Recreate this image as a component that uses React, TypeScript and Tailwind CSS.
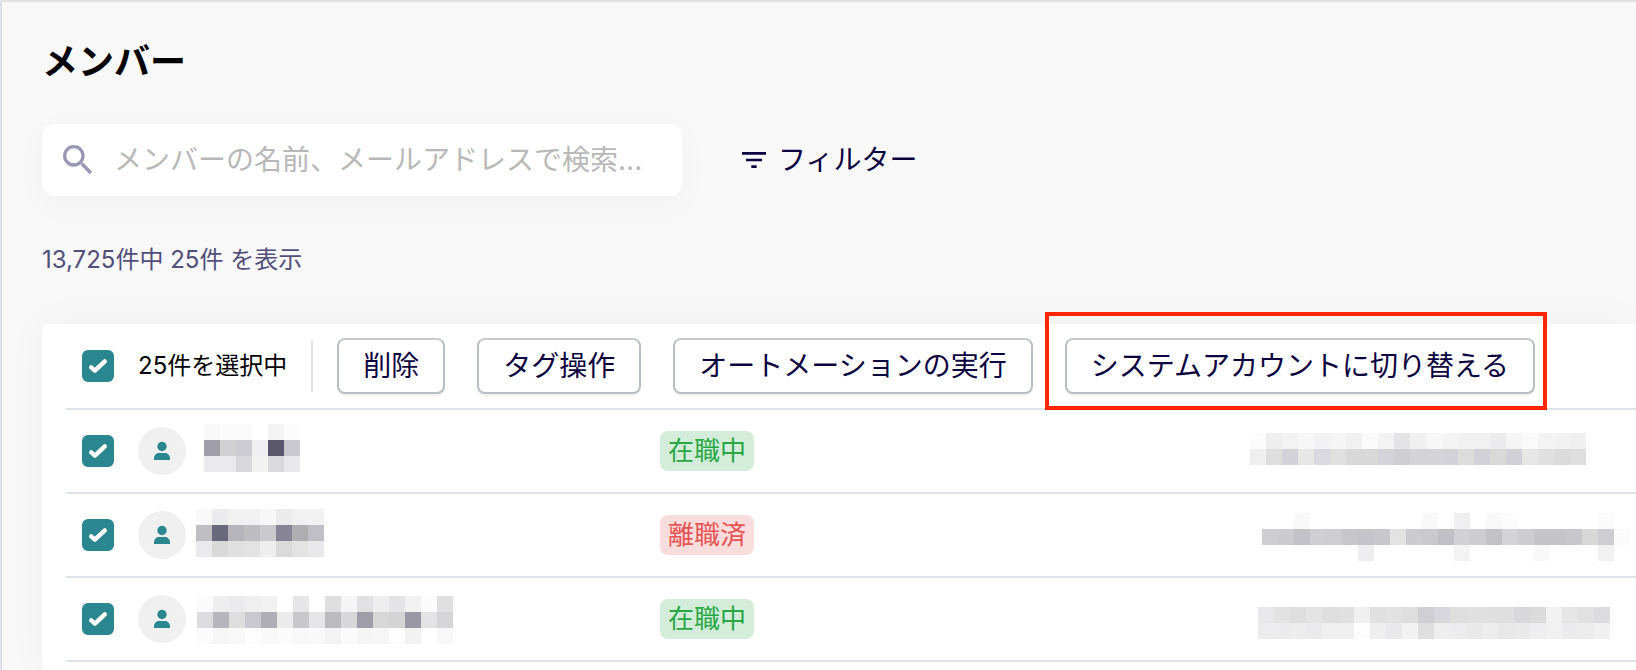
import { useState } from 'react';
import { MdFilterList, MdSearch } from 'react-icons/md';

interface MosaicData {
    x: number;
    y: number;
    rows: string[][];
}

interface Member {
    id: number;
    status: 'active' | 'retired';
    name: MosaicData;
    email: MosaicData;
}

const statusLabels = {
    active: '在職中',
    retired: '離職済',
};

const statusColors = {
    active: 'bg-[#d4edda] text-[#28a745]',
    retired: 'bg-[#f9dddd] text-[#e55353]',
};

// Grey cells of the masked values, one string per line of cells
const cells = (line: string) => line.split(' ').map((c) => `#${c}`);

const members: Member[] = [
    {
        id: 1,
        status: 'active',
        name: {
            x: 10,
            y: 5,
            rows: [
                cells('f8f8f8 fbfbfb fafafa ffffff f3f3f3 fcfcfc'),
                cells('9f9da8 d1d1d3 cdccd2 f0f0f3 5b586d cac9cf'),
                cells('eaeaec eaeaec d9d9db f2f2f2 dadadc e9e9eb'),
            ],
        },
        email: {
            x: 4,
            y: 14,
            rows: [
                cells('fcfcfc eeeeee f3f3f3 f7f7f7 f2f2f5 f5f5f5 f1f1f1 fafafa f3f3f3 e4e4e6 f0f0f0 f7f7f7 f4f4f4 f1f1f1 f1f1f1 ebebee f5f5f5 fafafa f3f3f3 f2f2f2 f0f0f0'),
                cells('efefef dededf d3d2d8 e7e7e8 dad9df e0e0e1 d8d8d9 d8d8d9 d4d3d9 cfced3 d4d3d8 d4d3d8 d3d2d8 dcdcdd d2d1d7 d9d9da d1d0d6 e7e7e8 e0e0e1 dbdbdc dededf'),
            ],
        },
    },
    {
        id: 2,
        status: 'retired',
        name: {
            x: 2,
            y: 6,
            rows: [
                cells('f9f9f9 ebebed f1f1f1 f1f1f1 f7f7f7 ebebeb f1f1f1 f1f1f1'),
                cells('bfbec3 6a687b b6b5bb bebdc2 cac9ce 868495 aeaeb3 c0bfc6'),
                cells('eaeaec d9d9da e0e0e1 e3e3e4 eeeeee dadadb e3e3e4 e9e9eb'),
            ],
        },
        email: {
            x: 16,
            y: 10,
            rows: [
                cells('ffffff ffffff f9f9f9 ffffff ffffff ffffff ffffff ffffff ffffff ffffff f9f9f9 ffffff efeff1 ffffff f9f9f9 fcfcfc ffffff ffffff ffffff ffffff ffffff fbfbfb ffffff'),
                cells('cecdd2 cccbd0 c3c2c8 cfced3 cecdd2 c7c6cb c5c4ca c8c7cc e3e3e4 cccbd0 cac9ce c0bfc5 d1d0d5 cdccd1 c3c2c7 d4d3d8 cdccd1 c5c4c9 c5c4c9 c8c7cb d8d8d9 cecdd2 fbfbfb'),
                cells('ffffff ffffff ffffff ffffff ffffff ffffff eeeef1 ffffff ffffff ffffff ffffff ffffff f3f3f3 ffffff ffffff ffffff ffffff f9f9f9 ffffff ffffff ffffff f1f1f1 ffffff'),
            ],
        },
    },
    {
        id: 3,
        status: 'active',
        name: {
            x: 3,
            y: 9,
            rows: [
                cells('fbfbfb eeeeee ebebed efefef f1f1f1 ffffff e6e6e8 ffffff dededf f5f5f5 e1e1e3 eeeeee e4e4e6 f1f1f1 fbfbfb e0e0e1'),
                cells('dcdcde b6b5bc dededf cac9cf afaeb4 ebebeb c8c8ca e5e5e8 bababf d8d8da 9f9ea8 d7d7d8 d4d4d5 9a99a3 e3e3e5 d5d5d7'),
                cells('fbfbfb f6f6f6 f8f8f8 fdfdfd f9f9f9 fbfbfb f8f8f8 f9f9f9 f3f3f3 fafafa f5f5f5 f6f6f6 fdfdfd f2f2f2 ffffff f8f8f8'),
            ],
        },
        email: {
            x: 12,
            y: 20,
            rows: [
                cells('e8e8ea e2e2e3 dededf e4e4e5 dfdfe0 e0e0e1 f0f0f0 e0e0e1 e2e2e3 dededf d0cfd4 d8d7dd dededf e0e0e1 dfdfe0 dfdfe0 d8d8da dbdbdc f2f2f2 e6e6e7 e1e1e2 dcdcde'),
                cells('ececee ebebed ededed eaeaec efefef efefef fdfdfd eeeeee e9e9eb f2f2f2 dfdfe0 eeeeee ececee e9e9ea ededed e8e8e9 e9e9ea eeeef0 f1f1f1 ebebed ececec f0f0f0'),
            ],
        },
    },
];

function Mosaic({ data }: { data: MosaicData }) {
    const width = data.x + data.rows[0].length * 16;

    return (
        <svg
            width={width}
            height="64"
            viewBox={`0 0 ${width} 64`}
            shapeRendering="crispEdges"
            className="block shrink-0"
            aria-hidden="true"
        >
            {data.rows.map((row, r) =>
                row.map((fill, c) => (
                    <rect
                        key={`${r}-${c}`}
                        x={data.x + c * 16}
                        y={data.y + r * 16}
                        width="16"
                        height="16"
                        fill={fill}
                    />
                )),
            )}
        </svg>
    );
}

interface CheckboxProps {
    id: string;
    label?: string;
    checked: boolean;
    onChange: () => void;
}

function Checkbox({ id, label, checked, onChange }: CheckboxProps) {
    return (
        <span className="relative block h-8 w-8 shrink-0">
            <input
                id={id}
                type="checkbox"
                aria-label={label}
                checked={checked}
                onChange={onChange}
                className="block h-8 w-8 appearance-none rounded-md border-2 border-[#adb5bd] bg-white checked:border-[#2a868f] checked:bg-[#2a868f]"
            />
            {checked && (
                <svg
                    viewBox="0 0 32 32"
                    className="pointer-events-none absolute inset-0 h-8 w-8"
                    fill="none"
                    stroke="#fff"
                    strokeWidth="4.4"
                    strokeLinecap="round"
                    strokeLinejoin="round"
                >
                    <path d="M9.2 17.4 L12.9 20.7 L22.8 11.4" />
                </svg>
            )}
        </span>
    );
}

function Avatar() {
    return (
        <span className="flex h-12 w-12 shrink-0 items-center justify-center rounded-full bg-[#f0f0f0]">
            <svg width="16" height="20" viewBox="0 0 16 20" fill="#2a868f" aria-hidden="true">
                <circle cx="8" cy="5.5" r="4.7" />
                <path d="M0 19 V17.5 C0 14 2.5 12 5.5 12 H10.5 C13.5 12 16 14 16 17.5 V19 Z" />
            </svg>
        </span>
    );
}

function ActionButton({ children }: { children: string }) {
    return (
        <button
            type="button"
            className="h-14 rounded-lg border-2 border-[#b9bec4] border-t-[#c8c9cd] bg-white px-6 text-[28px] leading-10 whitespace-nowrap text-[#0b0340] shadow-[0_2px_0_rgba(0,0,0,0.05)]"
        >
            {children}
        </button>
    );
}

export default function Members() {
    const [selected, setSelected] = useState<number[]>(members.map((m) => m.id));
    const allSelected = selected.length === members.length;

    const toggle = (id: number) =>
        setSelected((prev) => (prev.includes(id) ? prev.filter((v) => v !== id) : [...prev, id]));

    return (
        <div className="flex min-h-screen flex-col overflow-hidden border-t-2 border-l-2 border-t-[#e3e3e3] border-l-[#dee2e6] bg-[#f8f8f8] pt-10 pl-10 font-['Inter','Noto_Sans_CJK_JP',sans-serif]">
            <h1 className="text-4xl leading-10 font-bold text-black">メンバー</h1>

            <div className="mt-[42px] flex items-center gap-14">
                <label
                    htmlFor="member-search"
                    className="flex h-18 w-[640px] items-center gap-4 rounded-xl bg-white px-4 shadow-[0_8px_32px_rgba(0,0,0,0.03)]"
                >
                    <MdSearch className="h-10 w-10 shrink-0 text-[#9a97b3]" />
                    <input
                        id="member-search"
                        type="text"
                        aria-label="メンバーを検索"
                        placeholder="メンバーの名前、メールアドレスで検索..."
                        className="h-10 min-w-0 flex-1 bg-transparent text-[28px] leading-10 outline-none placeholder:text-[#b8b8b8]"
                    />
                </label>
                <button
                    type="button"
                    className="flex items-center gap-2 text-[28px] leading-10 text-[#0b0340]"
                >
                    <MdFilterList className="h-8 w-8" />
                    フィルター
                </button>
            </div>

            <p className="mt-12 text-2xl leading-8 text-[#514e78]">13,725件中 25件 を表示</p>

            <section className="mt-12 flex-1 rounded-tl-lg bg-white pl-6 shadow-[0_0_40px_rgba(0,0,0,0.04)]">
                <div className="flex h-[86px] items-center gap-6 border-b-2 border-[#dee2e6] pl-4">
                    <Checkbox
                        id="select-all"
                        checked={allSelected}
                        onChange={() => setSelected(allSelected ? [] : members.map((m) => m.id))}
                    />
                    <label
                        htmlFor="select-all"
                        className="text-2xl leading-8 whitespace-nowrap text-black"
                    >
                        25件を選択中
                    </label>
                    <div className="h-13 w-0.5 shrink-0 bg-[#dee2e6]" />
                    <div className="flex gap-8">
                        <ActionButton>削除</ActionButton>
                        <ActionButton>タグ操作</ActionButton>
                        <ActionButton>オートメーションの実行</ActionButton>
                        <div className="relative">
                            <ActionButton>システムアカウントに切り替える</ActionButton>
                            <div className="pointer-events-none absolute -top-[26px] -right-3 -bottom-4 -left-5 border-4 border-[#ff2600]" />
                        </div>
                    </div>
                </div>

                <table className="w-full table-fixed border-collapse">
                    <colgroup>
                        <col className="w-18" />
                        <col className="w-[522px]" />
                        <col className="w-[586px]" />
                        <col />
                    </colgroup>
                    <tbody>
                        {members.map((member) => (
                            <tr
                                key={member.id}
                                className="h-[84px] shadow-[inset_0_-2px_0_#dee2e6]"
                            >
                                <td className="pb-0.5 pl-4">
                                    <Checkbox
                                        id={`member-${member.id}`}
                                        label={`メンバー ${member.id}`}
                                        checked={selected.includes(member.id)}
                                        onChange={() => toggle(member.id)}
                                    />
                                </td>
                                <td className="pb-0.5">
                                    <div className="flex items-center gap-2">
                                        <Avatar />
                                        <Mosaic data={member.name} />
                                    </div>
                                </td>
                                <td className="pb-0.5">
                                    <span
                                        className={`block w-fit rounded-lg px-2 text-[26px] leading-10 ${statusColors[member.status]}`}
                                    >
                                        {statusLabels[member.status]}
                                    </span>
                                </td>
                                <td className="overflow-hidden pb-0.5">
                                    <Mosaic data={member.email} />
                                </td>
                            </tr>
                        ))}
                    </tbody>
                </table>
            </section>
        </div>
    );
}
